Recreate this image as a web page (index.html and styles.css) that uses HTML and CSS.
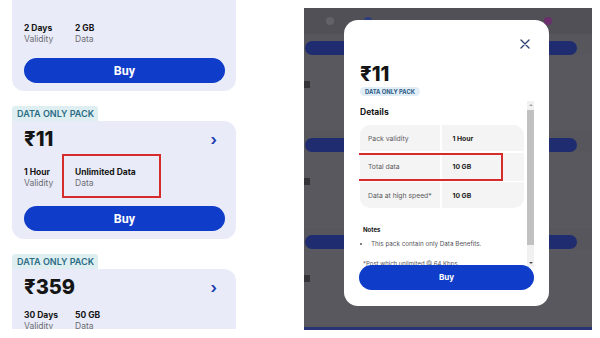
FILE: index.html
```html
<!DOCTYPE html>
<html>
  <head>
    <title>Data pack</title>
    <link rel="stylesheet" href="styles.css">
  </head>
  <body>
    <div class="page">
      <div class="plans">
        <div class="card card-cut">
          <div class="facts">
            <div class="fact"><b>2 Days</b><span>Validity</span></div>
            <div class="fact"><b>2 GB</b><span>Data</span></div>
          </div>
          <button class="buy">Buy</button>
        </div>

        <div class="tag">DATA ONLY PACK</div>
        <div class="card">
          <div class="price-row">
            <span class="price">₹11</span><span class="chev">›</span>
          </div>
          <div class="facts">
            <div class="fact"><b>1 Hour</b><span>Validity</span></div>
            <div class="fact marked"><b>Unlimited Data</b><span>Data</span></div>
          </div>
          <button class="buy">Buy</button>
        </div>

        <div class="tag">DATA ONLY PACK</div>
        <div class="card card-tight">
          <div class="price-row">
            <span class="price">₹359</span><span class="chev">›</span>
          </div>
          <div class="facts">
            <div class="fact"><b>30 Days</b><span>Validity</span></div>
            <div class="fact"><b>50 GB</b><span>Data</span></div>
          </div>
        </div>
      </div>

      <div class="screen">
        <div class="ghost">
          <div class="ghost-top">
            <span class="dot"></span><span class="dot blue"></span><span class="line"></span><span class="dot red"></span>
          </div>
          <div class="ghost-bar"></div>
          <div class="ghost-card"><span class="ghost-price"></span></div>
          <div class="ghost-bar"></div>
          <div class="ghost-card"><span class="ghost-price"></span></div>
          <div class="ghost-bar"></div>
          <div class="ghost-card"><span class="ghost-price"></span></div>
          <div class="ghost-band"></div>
        </div>

        <div class="modal">
          <div class="modal-head">
            <svg class="close" viewBox="0 0 10 10" width="10" height="10">
              <path d="M1 1 L9 9 M9 1 L1 9" stroke="#2b3d6b" stroke-width="1.3" fill="none" stroke-linecap="round"/>
            </svg>
          </div>
          <div class="modal-price">₹11</div>
          <div class="pill">DATA ONLY PACK</div>

          <div class="scroll">
            <div class="scroll-body">
              <div class="section-title">Details</div>
              <div class="info">
                <div class="cell label">Pack validity</div>
                <div class="cell value">1 Hour</div>
                <div class="cell label tall">Total data</div>
                <div class="cell value tall">10 GB</div>
                <div class="cell label">Data at high speed*</div>
                <div class="cell value">10 GB</div>
                <div class="mark"></div>
              </div>
              <div class="notes-title">Notes</div>
              <ul class="notes">
                <li>This pack contain only Data Benefits.</li>
              </ul>
              <p class="fine">*Post which unlimited @ 64 Kbps</p>
            </div>
            <div class="scrollbar">
              <span class="arrow up"></span>
              <span class="thumb"></span>
              <span class="arrow down"></span>
            </div>
          </div>

          <div class="modal-buy">Buy</div>
        </div>
      </div>
    </div>
  </body>
</html>
```

FILE: styles.css
```css
body {
  margin: 0;
  background: #fff;
  color: #151515;
  font-family: Inter, "Noto Sans", sans-serif;
}

.page {
  display: flex;
  height: 338px;
  overflow: hidden;
}

/* left: plan list */
.plans {
  width: 224px;
  margin-left: 12px;
  height: 329px;
  overflow: hidden;
  display: flex;
  flex-direction: column;
  flex-shrink: 0;
}

.card {
  background: #e9ecf8;
  border-radius: 12px;
  padding: 6px 11px 8px 12px;
}

.card-cut {
  border-radius: 0 0 12px 12px;
  padding-top: 23px;
}

.tag {
  align-self: flex-start;
  margin-top: 15px;
  padding: 2px 4px 1px 5px;
  background: #deeef1;
  color: #2a6c84;
  font-size: 9px;
  font-weight: 600;
  line-height: 12px;
  border-radius: 3px 3px 0 0;
}

.tag + .card {
  border-top-left-radius: 0;
}

.price-row {
  display: flex;
  justify-content: space-between;
  align-items: center;
}

.price {
  font-size: 20px;
  font-weight: 800;
  line-height: 24px;
}

.chev {
  color: #1c3fae;
  font-size: 15px;
  font-weight: 700;
  margin-right: 8px;
}

.facts {
  display: flex;
  margin-top: 16px;
}

.card-cut .facts {
  margin-top: 0;
}

.card-tight .facts {
  margin-top: 11px;
}

.fact {
  display: flex;
  flex-direction: column;
  font-size: 8.5px;
  line-height: 11px;
}

.fact:first-child {
  width: 51px;
}

.fact b {
  font-weight: 700;
}

.fact span {
  color: #6c6c72;
}

.marked {
  position: relative;
}

.marked::after {
  content: "";
  position: absolute;
  left: -13px;
  top: -13px;
  width: 95px;
  height: 40px;
  border: 2px solid #d62b2b;
}

.buy {
  display: block;
  width: 100%;
  height: 25px;
  margin-top: 17px;
  border: 0;
  border-radius: 13px;
  background: #0f3cc9;
  color: #fff;
  font-family: "Roboto", sans-serif;
  font-size: 12.5px;
  font-weight: 700;
}

.card-cut .buy {
  margin-top: 13px;
}

/* right: phone screen, page behind is dimmed, modal sits on top */
.screen {
  display: grid;
  width: 288px;
  height: 322px;
  margin: 8px 0 0 68px;
  flex-shrink: 0;
  background: rgb(86, 86, 92);
  overflow: hidden;
}

.ghost,
.modal {
  grid-area: 1 / 1;
}

.ghost {
  display: flex;
  flex-direction: column;
  height: 322px;
}

.ghost-top {
  display: flex;
  align-items: center;
  gap: 30px;
  height: 26px;
  padding-left: 22px;
  background: rgb(80, 80, 86);
}

.ghost-top span {
  display: block;
  width: 8px;
  height: 8px;
  border-radius: 50%;
  background: rgb(98, 98, 104);
}

.ghost-top .blue {
  background: rgb(45, 60, 130);
}

.ghost-top .line {
  width: 60px;
  height: 3px;
  border-radius: 0;
  background: rgb(104, 104, 110);
}

.ghost-top .red {
  margin-left: 52px;
  background: rgb(107, 47, 110);
}

.ghost-bar {
  height: 14px;
  width: 272px;
  margin: 7px 0 0 1px;
  border-radius: 8px;
  background: rgb(31, 45, 112);
  flex-shrink: 0;
}

.ghost-card {
  height: 76px;
  padding-top: 26px;
  box-sizing: border-box;
  flex-shrink: 0;
  background: rgb(88, 88, 94);
}

.ghost-price {
  display: block;
  width: 6px;
  height: 7px;
  background: rgb(51, 51, 56);
}

.ghost-band {
  flex: 1;
  margin-top: 2px;
  background: rgb(38, 51, 116);
}

.modal {
  align-self: start;
  justify-self: start;
  width: 205px;
  height: 286px;
  margin: 12px 0 0 40px;
  box-sizing: border-box;
  padding: 19px 15px 16px 15px;
  background: #fff;
  border-radius: 14px;
  display: flex;
  flex-direction: column;
}

.modal-head {
  display: flex;
  justify-content: flex-end;
  padding-right: 4px;
  height: 10px;
}

.modal-price {
  margin: 13px 0 0 1px;
  font-size: 20px;
  font-weight: 800;
  line-height: 24px;
}

.pill {
  align-self: flex-start;
  margin: 1px 0 0 1px;
  padding: 0 5px;
  background: #e1eef7;
  color: #2d5b86;
  font-size: 5.8px;
  font-weight: 700;
  line-height: 9px;
  border-radius: 5px;
}

.scroll {
  display: flex;
  gap: 3px;
  height: 167px;
  margin-top: 5px;
  overflow: hidden;
}

.scroll-body {
  flex: 1;
  padding-left: 1px;
}

.section-title {
  margin-top: 6px;
  font-size: 8.5px;
  font-weight: 700;
  line-height: 11px;
}

.info {
  position: relative;
  display: grid;
  grid-template-columns: 80px 1fr;
  gap: 1.5px;
  margin-top: 7px;
}

.cell {
  height: 26px;
  display: flex;
  align-items: center;
  background: #f4f4f5;
  font-size: 6.8px;
}

.cell.tall {
  height: 28px;
}

.label {
  padding-left: 8px;
  color: #5b5b60;
}

.value {
  padding-left: 11px;
  font-weight: 700;
  color: #222;
}

.info .cell:first-child { border-top-left-radius: 10px; }
.info .cell:nth-child(2) { border-top-right-radius: 10px; }
.info .cell:nth-child(5) { border-bottom-left-radius: 10px; }
.info .cell:nth-child(6) { border-bottom-right-radius: 10px; }

.mark {
  position: absolute;
  left: -3px;
  top: 28px;
  width: 142px;
  height: 24px;
  border: 2px solid #d62b2b;
}

.notes-title {
  margin-top: 18px;
  font-size: 6px;
  font-weight: 700;
  line-height: 8px;
  padding-left: 3px;
}

.notes {
  margin: 6px 0 0 0;
  padding-left: 11px;
  font-size: 6.3px;
  line-height: 8px;
  color: #55555a;
}

.fine {
  margin: 12px 0 0 3px;
  font-size: 6px;
  line-height: 8px;
  color: #55555a;
}

.scrollbar {
  width: 7px;
  display: flex;
  flex-direction: column;
  align-items: center;
  background: #f1f1f1;
}

.arrow {
  width: 0;
  height: 0;
  margin: 3px 0;
  border-left: 2px solid transparent;
  border-right: 2px solid transparent;
}

.arrow.up {
  border-bottom: 2px solid #a3a3a3;
}

.arrow.down {
  border-top: 2px solid #505050;
}

.thumb {
  flex: 1;
  width: 7px;
  margin: 1px 0 14px;
  background: #c1c1c1;
}

.modal-buy {
  height: 25px;
  margin-top: -2px;
  border-radius: 13px;
  background: #0f3cc9;
  color: #fff;
  font-size: 8px;
  font-weight: 700;
  line-height: 25px;
  text-align: center;
  position: relative;
}
```
